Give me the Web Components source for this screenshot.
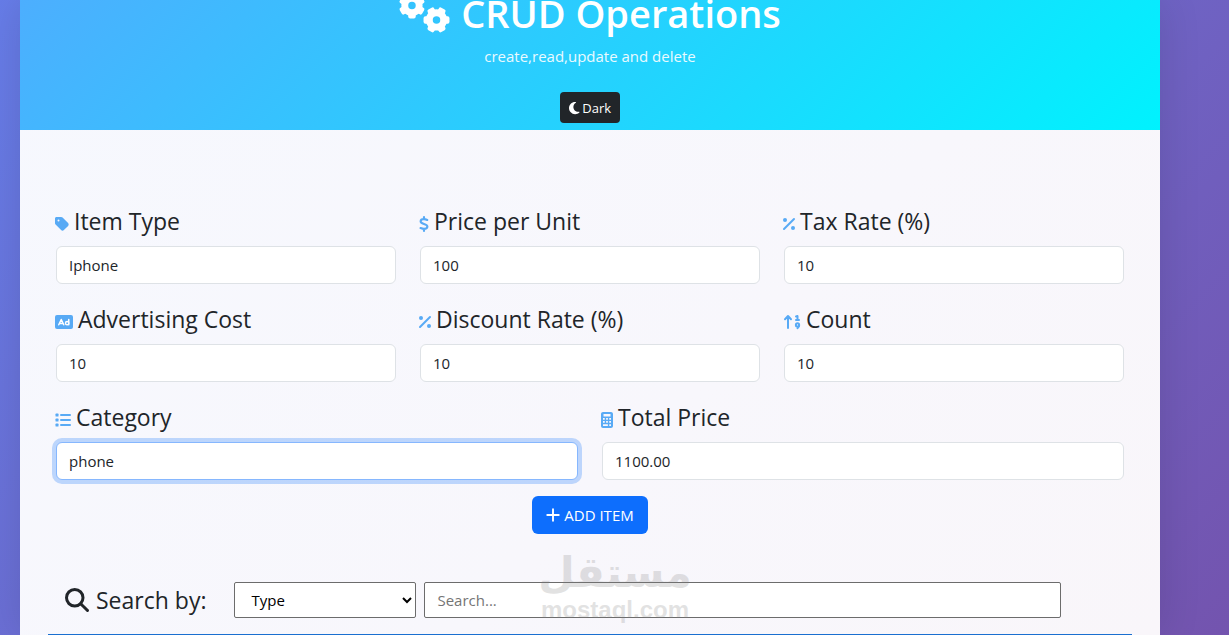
<!DOCTYPE html>
<html lang="en">
<head>
<meta charset="utf-8">
<title>CRUD Operations</title>
<style>
html { height: 100%; overflow: hidden; }
body {
  margin: 0; height: 100%; overflow: hidden;
  font: 15px/24px "Open Sans", "Noto Sans", sans-serif; color: #212529;
  background: #764ba2 linear-gradient(135deg, #667eea 0%, #764ba2 100%) 0 -64px / 100% 1100px no-repeat;
}
</style>
</head>
<body>
<crud-page>
  <page-header></page-header>
  <item-form></item-form>
  <search-bar></search-bar>
  <item-table></item-table>
  <site-watermark></site-watermark>
</crud-page>
<script>
const ICONS = {
  gears: ['0 0 640 512', ''],
  moon: ['0 0 384 512', '<path d="M223.500 32C100 32 0 132.300 0 256S100 480 223.500 480c60.600 0 115.500-24.200 155.800-63.400 5-4.900 6.300-12.500 3.100-18.700s-10.100-9.700-17-8.500c-9.800 1.700-19.800 2.600-30.100 2.600-96.900 0-175.500-78.800-175.500-176 0-65.800 36-123.100 89.300-153.300 6.100-3.500 9.200-10.500 7.700-17.300s-7.300-11.900-14.300-12.500c-6.300-.5-12.600-.8-19-.8z"/>'],
  tag: ['0 0 448 512', '<path fill-rule="evenodd" d="M0 80v149.500c0 17 6.700 33.300 18.700 45.300l176 176c25 25 65.500 25 90.500 0l133.500-133.500c25-25 25-65.500 0-90.500l-176-176c-12-12-28.300-18.700-45.300-18.700H48C21.500 32 0 53.500 0 80zm112 96a32 32 0 1 1 0-64 32 32 0 0 1 0 64z"/>'],
  dollar: ['0 0 320 512', '<path fill="none" stroke="currentColor" stroke-width="68" stroke-linecap="round" stroke-linejoin="round" d="M160 32v56M160 424v56M264 128c-30-14-64-26-104-28-64-2-105 22-108 68-3 103 216 67 216 171 0 52-45 73-108 73-43 0-78-14-112-27"/>'],
  percent: ['0 0 384 512', '<path fill="none" stroke="currentColor" stroke-width="64" stroke-linecap="round" d="M32 416 352 96"/><circle cx="64" cy="128" r="64"/><circle cx="320" cy="384" r="64"/>'],
  ad: ['0 0 576 512', '<rect y="32" width="576" height="448" rx="64"/><g fill="none" stroke="#fff" stroke-width="48" stroke-linecap="round" stroke-linejoin="round"><path d="M120 344l80-168 80 168M150 304h100M440 176v168"/><circle cx="388" cy="292" r="52"/></g>'],
  sort: ['0 0 576 512', '<g fill="none" stroke="currentColor" stroke-width="64" stroke-linecap="round" stroke-linejoin="round"><path d="M160 448V72M64 168l96-104 96 104M416 80l48-16v128M416 192h96"/><circle cx="464" cy="348" r="52"/><path d="M516 352c0 52-20 80-52 104"/></g>'],
  list: ['0 0 512 512', '<rect x="16" y="48" width="96" height="96" rx="20"/><rect x="16" y="208" width="96" height="96" rx="20"/><rect x="16" y="368" width="96" height="96" rx="20"/><rect x="160" y="64" width="352" height="64" rx="32"/><rect x="160" y="224" width="352" height="64" rx="32"/><rect x="160" y="384" width="352" height="64" rx="32"/>'],
  calc: ['0 0 384 512', '<path fill-rule="evenodd" d="M64 0C28.700 0 0 28.700 0 64v384c0 35.300 28.700 64 64 64h256c35.300 0 64-28.700 64-64V64c0-35.300-28.700-64-64-64H64zm16 64h224v80H80zM64 192h56v52H64zm100 0h56v52h-56zm100 0h56v52h-56zM64 288h56v52H64zm100 0h56v52h-56zm100 0h56v52h-56zM64 392h156v52H64zm200 0h56v52h-56z"/>'],
  plus: ['0 0 448 512', '<path fill="none" stroke="currentColor" stroke-width="60" stroke-linecap="round" d="M224 72v368M40 256h368"/>'],
  search: ['0 0 512 512', '<path fill="none" stroke="currentColor" stroke-width="64" stroke-linecap="round" d="M335 335 480 480"/><circle cx="208" cy="208" r="176" fill="none" stroke="currentColor" stroke-width="64"/>']
};

/* A six-toothed gear: a hub ring with rounded teeth around it. */
function gear(cx, cy, turn) {
  let teeth = '';
  for (let i = 0; i < 6; i++) {
    teeth += `<rect x="-48" y="-166" width="96" height="100" rx="24" transform="rotate(${turn + i * 60})"/>`;
  }
  return `<g transform="translate(${cx} ${cy})">${teeth}<circle r="92" fill="none" stroke="currentColor" stroke-width="88"/></g>`;
}
ICONS.gears[1] = gear(166, 160, 0) + gear(480, 344, 30);

function define(name, html, setup) {
  const template = document.createElement('template');
  template.innerHTML = html;
  customElements.define(name, class extends HTMLElement {
    connectedCallback() {
      if (this.shadowRoot) return;
      const root = this.attachShadow({ mode: 'open' });
      root.append(template.content.cloneNode(true));
      if (setup) setup(this, root);
    }
  });
}

define('app-icon', `
<style>
:host { display: inline-block; flex: none; }
svg { display: block; height: var(--icon-size, 16px); fill: currentColor; overflow: visible; }
</style><svg aria-hidden="true"></svg>`, (host, root) => {
  const [box, art] = ICONS[host.getAttribute('name')];
  const svg = root.querySelector('svg');
  svg.setAttribute('viewBox', box);
  svg.innerHTML = art;
});

define('crud-page', `
<style>
:host {
  display: flow-root; position: relative; margin: 0 69px 0 20px; min-height: 100vh;
  background: linear-gradient(135deg, #f6f8fe, #f8f7fc 60%, #f9f6fa);
  box-shadow: 0 0 40px rgba(0, 0, 0, .12);
}
</style><slot></slot>`);

define('page-header', `
<style>
:host {
  display: flex; flex-direction: column; align-items: center; color: #fff;
  margin-top: -42px; padding: 31px 32px 7px;
  background: linear-gradient(135deg, #4facfe 0%, #00f2fe 100%);
}
h1 { display: flex; align-items: center; gap: 12px; margin: 0 0 7px; font-size: 38px; line-height: 48px; font-weight: 600; --icon-size: 40px; }
p { margin: 0 0 24px; opacity: .9; }
button {
  display: flex; align-items: center; gap: 3px; height: 31px; padding: 0 9px; border: 0; border-radius: 4px;
  font: 13px/20px "Open Sans", "Noto Sans", sans-serif; color: #fff; background: #212529; --icon-size: 14px;
}
</style>
<h1><app-icon name="gears"></app-icon>CRUD Operations</h1>
<p>create,read,update and delete</p>
<button type="button"><app-icon name="moon"></app-icon>Dark</button>`);

define('form-field', `
<style>
:host { display: block; }
label { display: flex; align-items: center; gap: 5px; margin: 0 0 12px -1px; font-size: 23px; line-height: 26px; --icon-size: 16px; }
app-icon { color: #58aaf5; margin-top: 6px; }
input {
  display: block; box-sizing: border-box; width: 100%; height: 38px; padding: 6px 12px;
  font: 15px/24px "Open Sans", "Noto Sans", sans-serif; color: #212529;
  background: #fff; border: 1px solid #dee2e6; border-radius: 6px; outline: 0;
}
:host([active]) input, input:focus { border-color: #86b7fe; box-shadow: 0 0 0 4px rgba(13, 110, 253, .25); }
</style>
<label for="field"></label>
<input id="field" type="text">`, (host, root) => {
  const icon = document.createElement('app-icon');
  icon.setAttribute('name', host.getAttribute('icon'));
  root.querySelector('label').append(icon, host.getAttribute('label'));
  root.querySelector('input').value = host.getAttribute('value');
});

define('item-form', `
<style>
:host { display: block; padding: 78px 36px 0; }
form { display: grid; grid-template-columns: repeat(6, 1fr); gap: 22px 24px; }
form-field { grid-column: span 2; }
.half { grid-column: span 3; }
button {
  grid-column: 1 / -1; justify-self: center; margin-top: -6px;
  display: flex; align-items: center; gap: 4px; height: 38px; padding: 0 14px; border: 0; border-radius: 6px;
  font: 15px/24px "Open Sans", "Noto Sans", sans-serif; color: #fff; background: #0d6efd; --icon-size: 16px;
}
</style>
<form>
  <form-field icon="tag" label="Item Type" value="Iphone"></form-field>
  <form-field icon="dollar" label="Price per Unit" value="100"></form-field>
  <form-field icon="percent" label="Tax Rate (%)" value="10"></form-field>
  <form-field icon="ad" label="Advertising Cost" value="10"></form-field>
  <form-field icon="percent" label="Discount Rate (%)" value="10"></form-field>
  <form-field icon="sort" label="Count" value="10"></form-field>
  <form-field class="half" icon="list" label="Category" value="phone" active></form-field>
  <form-field class="half" icon="calc" label="Total Price" value="1100.00"></form-field>
  <button type="button"><app-icon name="plus"></app-icon>ADD ITEM</button>
</form>`);

define('search-bar', `
<style>
:host { display: flex; align-items: center; gap: 8px; padding: 48px 99px 0 45px; }
label { display: flex; align-items: center; gap: 7px; margin-right: 20px; font-size: 23px; line-height: 28px; --icon-size: 24px; }
select, input {
  box-sizing: border-box; height: 36px; border: 1px solid #6c6c6c; border-radius: 2px; background-color: #fff;
  font: 15px/24px "Open Sans", "Noto Sans", sans-serif; color: #000;
}
select { width: 182px; padding: 0 0 0 12px; }
input { flex: 1; min-width: 0; padding: 0 12px; }
input::placeholder { color: #757575; }
</style>
<label for="by"><app-icon name="search"></app-icon>Search by:</label>
<select id="by"><option>Type</option><option>Category</option></select>
<input type="text" placeholder="Search..." aria-label="Search">`);

define('item-table', `
<style>
:host { display: block; padding: 16px 28px 0; }
div { height: 1px; background: #1a6fd0; }
</style><div></div>`);

define('site-watermark', `
<style>
:host {
  position: absolute; top: 548px; left: 50%; width: 150px; margin-left: -50px;
  display: flex; flex-direction: column; align-items: center; color: #808080; opacity: .22; pointer-events: none;
}
b { font: 700 42px/50px "DejaVu Sans", sans-serif; }
span { font: 700 24px/24px "Liberation Sans", sans-serif; }
</style>
<b lang="ar" dir="rtl">مستقل</b><span>mostaql.com</span>`);
</script>
</body>
</html>
